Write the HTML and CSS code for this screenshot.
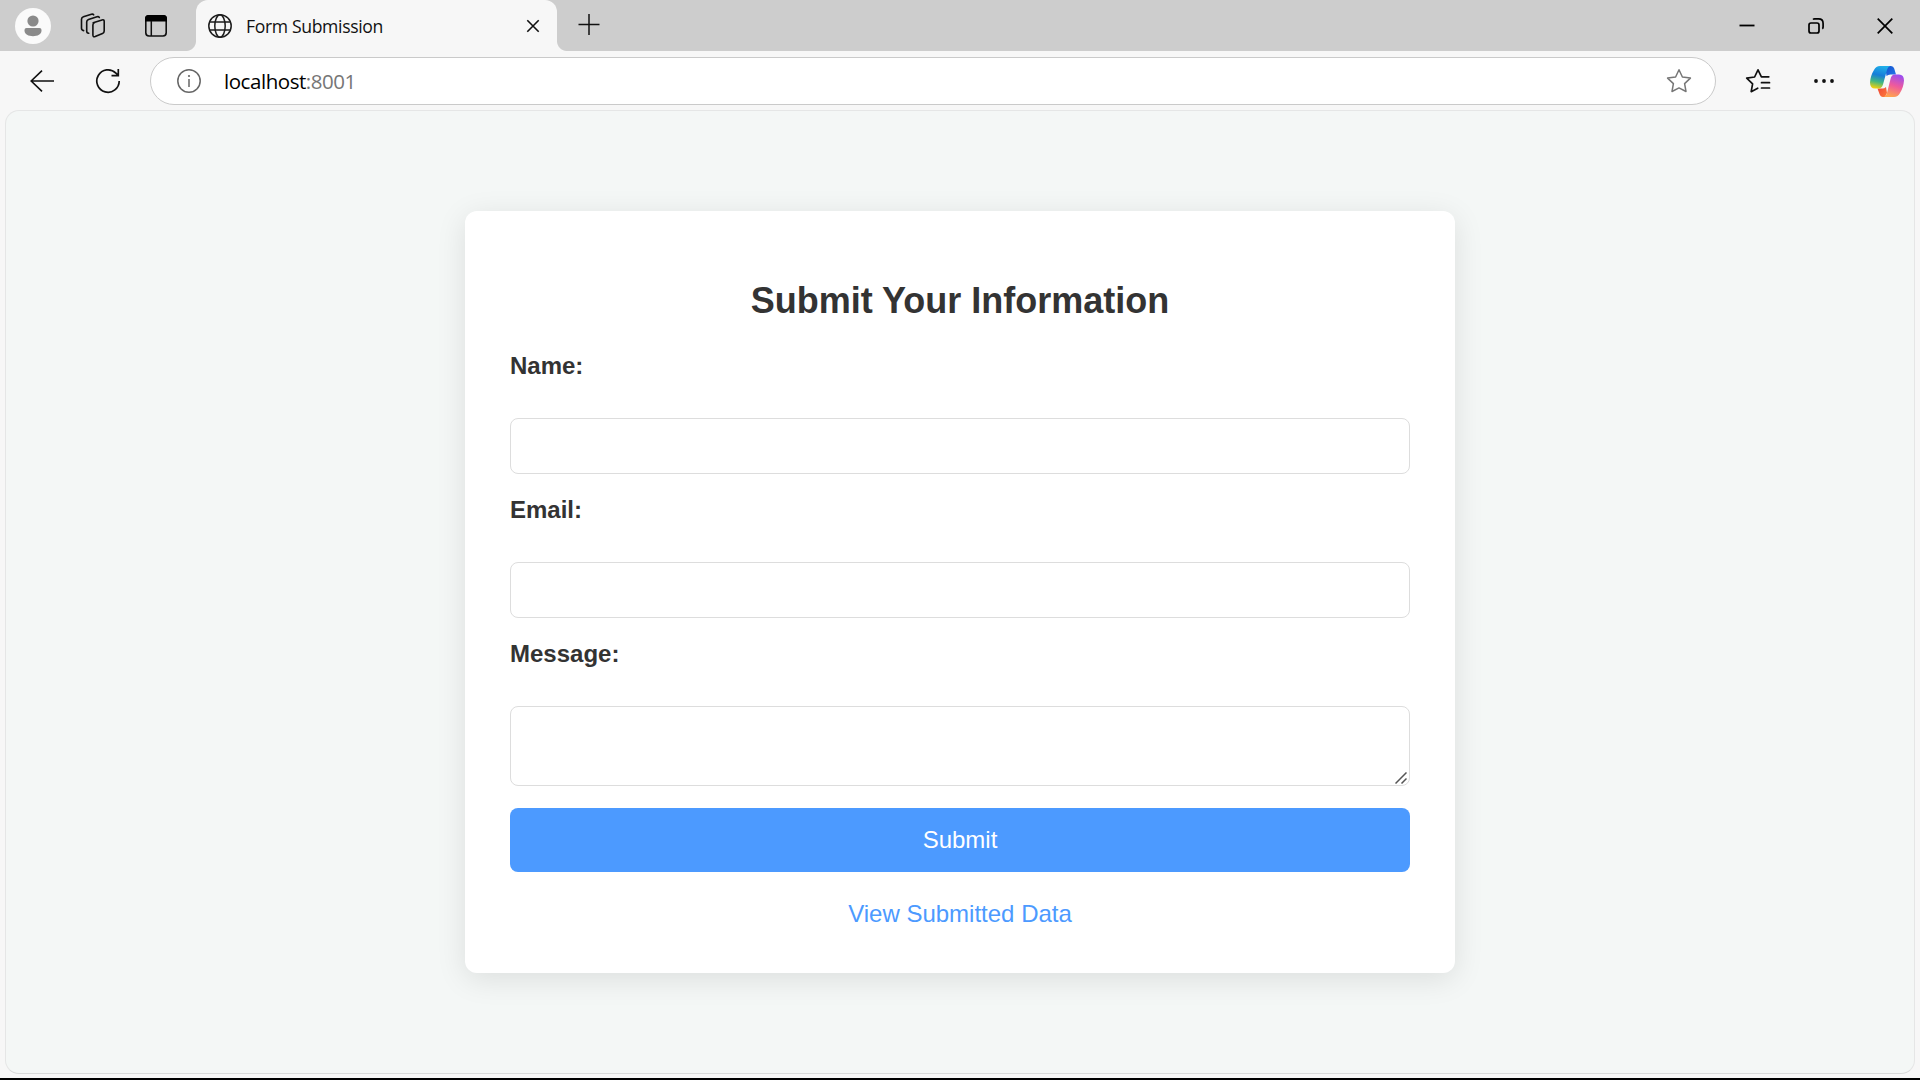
FILE: index.html
```html
<!DOCTYPE html>
<html lang="en">
<head>
<meta charset="utf-8">
<title>Form Submission</title>
<link rel="stylesheet" href="styles.css">
</head>
<body>
<header class="tab-bar">
  <div class="tab-tools">
    <span class="avatar"><svg width="36" height="36" viewBox="0 0 36 36"><circle cx="18" cy="13" r="5.6" fill="#8a8a8a"/><path d="M11.5 20h13q2 0 2 2v.5c0 4-4 5.7-8.500 5.700s-8.500-1.700-8.500-5.700v-.5q0-2 2-2z" fill="#8a8a8a"/></svg></span>
    <svg class="workspaces" width="26" height="26" viewBox="0 0 26 26"><g fill="none" stroke="#111" stroke-width="1.600" stroke-linejoin="round" stroke-linecap="round"><path d="M13.500 9.700l8.800-2.800q2.200-.6 2.200 1.600v9.500q0 1.800-1.700 2.600l-7.300 3q-2.300.8-2.300-1.500v-10q0-1.900 1.700-2.500z" transform="translate(-.3 0)"/><path d="M8.700 20.300q-2-.2-2-2v-9.300q0-2 1.800-2.600l8.500-2.700q1.700-.4 2.300.8"/><path d="M3.600 17.600q-2.100-.3-2.100-2.300v-9q0-2 1.900-2.600l8-2.500q1.700-.4 2.300.6"/></g></svg>
    <svg width="22" height="22" viewBox="0 0 22 22"><rect x=".8" y=".8" width="20.400" height="20.200" rx="3.200" fill="none" stroke="#111" stroke-width="1.600"/><path d="M0 6.500V3.500Q0 0 3.500 0h15Q22 0 22 3.500v3z" fill="#000"/><path d="M6.300 6v15" stroke="#111" stroke-width="1.500"/></svg>
  </div>
  <div class="tab">
    <svg width="24" height="24" viewBox="0 0 24 24" fill="none" stroke="#1c1c1c" stroke-width="1.500"><circle cx="12" cy="12" r="11.200"/><ellipse cx="12" cy="12" rx="5.200" ry="11.200"/><path d="M1.800 8h20.400M1.800 16h20.400"/></svg>
    <span class="tab-title">Form Submission</span>
    <svg class="tab-close" width="14" height="14" viewBox="0 0 14 14"><path d="M1.300 1.300l11.400 11.400M12.700 1.300L1.300 12.700" stroke="#111" stroke-width="1.600"/></svg>
  </div>
  <svg class="new-tab" width="22" height="22" viewBox="0 0 22 22"><path d="M.5 10.500h21M11 0v21" stroke="#111" stroke-width="1.500"/></svg>
  <div class="window-controls">
    <svg width="16" height="16" viewBox="0 0 16 16"><path d="M.5 7.500h15" stroke="#000" stroke-width="1.800"/></svg>
    <svg width="16" height="16" viewBox="0 0 16 16" fill="none" stroke="#000" stroke-width="1.700"><rect x="1" y="5" width="10" height="10" rx="2"/><path d="M5 1.500q.6-.6 1.600-.6h4q4.500 0 4.500 4.500v3.600q0 1.200-.8 1.700" /></svg>
    <svg width="16" height="16" viewBox="0 0 16 16"><path d="M.7.700l14.600 14.600M15.300.7L.7 15.300" stroke="#000" stroke-width="1.700"/></svg>
  </div>
</header>
<nav class="toolbar">
  <svg width="24" height="22" viewBox="0 0 24 22" fill="none" stroke="#111" stroke-width="1.600"><path d="M24 11H1M12 .7L1.200 11 12 21.300"/></svg>
  <svg class="reload" width="26" height="26" viewBox="0 0 26 26" fill="none" stroke="#111" stroke-width="1.700"><path d="M24.200 13A11.200 11.200 0 1 1 20.900 5.100L23.300 7.400M23.300 1v6.600h-6.800" /></svg>
  <div class="address">
    <svg width="24" height="24" viewBox="0 0 24 24"><circle cx="12" cy="12" r="11.200" fill="none" stroke="#666" stroke-width="1.500"/><path d="M12 10v8" stroke="#666" stroke-width="1.500"/><circle cx="12" cy="7" r="1.100" fill="#666"/></svg>
    <span class="url">localhost<span class="port">:8001</span></span>
    <svg class="favorite" width="26" height="26" viewBox="0 0 26 26"><path d="M13 1.800l3.400 7.200 8 1.100-5.800 5.500 1.400 7.900L13 19.900l-7 3.600 1.400-7.900L1.600 10.100l8-1.100z" fill="none" stroke="#777" stroke-width="1.500" stroke-linejoin="round"/></svg>
  </div>
  <div class="actions">
    <svg width="26" height="26" viewBox="0 0 26 26" fill="none" stroke="#111" stroke-width="1.700" stroke-linejoin="round" stroke-linecap="round"><path d="M12.700 20.200L6.200 23.700l1.400-7.900L1.700 10.200l7.900-1.200L13 1.800l3.400 7h7.400M16.500 14.700h8M16.500 20h8"/></svg>
    <svg width="20" height="6" viewBox="0 0 20 6" fill="#111"><circle cx="2" cy="3" r="1.900"/><circle cx="10" cy="3" r="1.900"/><circle cx="18" cy="3" r="1.900"/></svg>
    <svg class="copilot" width="34" height="31" viewBox="0 0 34 31">
      <defs>
        <linearGradient id="cool" x1=".5" y1="0" x2=".3" y2="1"><stop offset="0" stop-color="#20aee8"/><stop offset=".4" stop-color="#167dd8"/><stop offset=".7" stop-color="#42b781"/><stop offset="1" stop-color="#f5d10b"/></linearGradient>
        <linearGradient id="warm" x1=".7" y1="0" x2=".4" y2="1"><stop offset="0" stop-color="#9a4df1"/><stop offset=".5" stop-color="#ef5a9c"/><stop offset="1" stop-color="#ffa34f"/></linearGradient>
        <linearGradient id="fold" x1="0" y1="0" x2="1" y2="1"><stop offset="0" stop-color="#1452ce"/><stop offset="1" stop-color="#2477e8"/></linearGradient>
        <linearGradient id="ember" x1="0" y1="0" x2="1" y2="1"><stop offset="0" stop-color="#ed4436"/><stop offset="1" stop-color="#ff7c3b"/></linearGradient>
      </defs>
      <path d="M15 0h6q2.500 0 3.200 2.500L26 8.500h-5.500q-2.500 0-4 1.500z" fill="url(#fold)"/>
      <path d="M7.500 22.500h5q2 0 3.500-1.500l1 6-2 4h-2q-2.500 0-3.500-3z" fill="url(#ember)"/>
      <path d="M10 0h10.500q-2.500.5-3.500 4l-4 14.500q-1.200 4-4.500 4H5q-5 0-5-6 .5-7 4-12.500Q6 0 10 0z" fill="url(#cool)"/>
      <path d="M24.500 8.500H29q5 0 5 6-.5 7-4 12.500-2 4-6 4H13.500q2.500-.5 3.500-4l3.500-14q1-4.500 4-4.500z" fill="url(#warm)"/>
    </svg>
  </div>
</nav>
<main class="viewport">
  <form class="card">
    <h2 class="title">Submit Your Information</h2>
    <label class="label" for="name">Name:</label>
    <input class="field" id="name" type="text">
    <label class="label" for="email">Email:</label>
    <input class="field" id="email" type="email">
    <label class="label" for="message">Message:</label>
    <div class="message-box">
      <textarea class="field message" id="message"></textarea>
      <svg class="grip" width="12" height="12" viewBox="0 0 12 12"><path d="M.5 11.500l11-11M6.500 11.500l5-5" stroke="#555" stroke-width="1.500"/></svg>
    </div>
    <button class="submit" type="button">Submit</button>
    <a class="link">View Submitted Data</a>
  </form>
</main>
</body>
</html>
```
FILE: styles.css
```css
* { box-sizing: border-box; }
body {
  margin: 0;
  height: 1080px;
  overflow: hidden;
  display: flex;
  flex-direction: column;
  background: #f7f7f7;
  border-bottom: 2px solid #000;
  font-family: "Liberation Sans", Arial, sans-serif;
}
svg { display: block; flex: none; }

.tab-bar { display: flex; height: 51px; background: #cdcdcd; }
.tab-tools { width: 196px; padding: 1px 0 0 15px; display: flex; align-items: center; }
.avatar { width: 36px; height: 36px; border-radius: 50%; background: #fafafa; }
.workspaces { margin: 0 39px 0 29px; }
.tab {
  position: relative;
  width: 361px;
  padding: 1px 25px 0 12px;
  display: flex;
  align-items: center;
  background: #f7f7f7;
  border-radius: 12px 12px 0 0;
}
.tab::before, .tab::after {
  content: "";
  position: absolute;
  bottom: 0;
  width: 10px;
  height: 10px;
}
.tab::before { left: -10px; background: radial-gradient(circle at 0 0, transparent 9.5px, #f7f7f7 10.500px); }
.tab::after { right: -10px; background: radial-gradient(circle at 100% 0, transparent 9.5px, #f7f7f7 10.500px); }
.tab-title { margin: -1px 0 0 14px; font: 17.600px "Open Sans", sans-serif; letter-spacing: -0.35px; color: #111; }
.tab-close { margin-left: auto; margin-right: -8px; }
.new-tab { margin: 14px 0 0 21px; }
.window-controls { margin-left: auto; padding: 0 27px 0 0; display: flex; align-items: center; gap: 53px; }

.toolbar { height: 59px; padding: 6px 16px 5px 30px; display: flex; align-items: center; }
.reload { margin: 0 42px 0 41px; }
.address {
  width: 1566px;
  height: 48px;
  margin-left: -13px;
  padding: 0 23px 0 26px;
  display: flex;
  align-items: center;
  background: #fff;
  border: 1px solid #cacaca;
  border-radius: 24px;
}
.url { margin-left: 23px; font: 20.500px "Open Sans", sans-serif; letter-spacing: -0.45px; color: #000; }
.port { color: #767676; }
.favorite { margin-left: auto; }
.actions { margin-left: auto; display: flex; align-items: center; gap: 43px; }
.copilot { margin-left: -7px; }

.viewport {
  width: 1910px;
  height: 964px;
  margin-left: 5px;
  padding-top: 100px;
  background: #f4f7f6;
  border: 1px solid #e5e6e6;
  border-bottom-color: #d9dada;
  border-radius: 14px;
}
.card {
  width: 990px;
  height: 762px;
  margin: 0 auto;
  padding: 66px 45px 45px;
  display: flex;
  flex-direction: column;
  background: #fff;
  border-radius: 12px;
  box-shadow: 0 6px 30px rgba(0, 0, 0, 0.1);
}
.title { margin: 0 0 30px; font-size: 36px; line-height: 48px; text-align: center; color: #333; }
.label { height: 58px; margin-bottom: 5px; font-size: 24px; font-weight: 700; line-height: 22px; color: #333; }
.field {
  display: block;
  width: 900px;
  height: 56px;
  margin: 0 0 25px;
  background: #fff;
  border: 1px solid #ddd;
  border-radius: 8px;
  outline: 0;
}
.message-box { position: relative; margin-bottom: 22px; }
.message { height: 80px; margin: 0; resize: none; }
.grip { position: absolute; right: 3px; bottom: 2px; }
.submit {
  height: 64px;
  padding: 0;
  border: 0;
  border-radius: 8px;
  background: #4c9aff;
  color: #fff;
  font: 24px "Liberation Sans", Arial, sans-serif;
}
.link { margin-top: 28px; font-size: 24px; line-height: 28px; text-align: center; color: #4c9aff; }
```
